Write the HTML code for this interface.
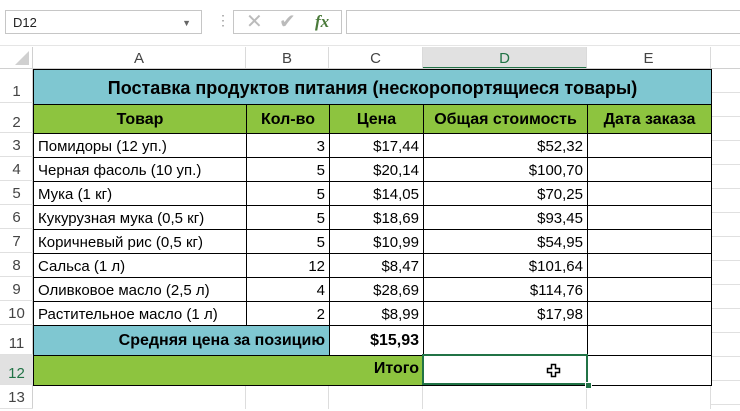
<!DOCTYPE html>
<html><head><meta charset="utf-8"><style>
body{margin:0;width:740px;height:409px;overflow:hidden;background:#fff;font-family:"Liberation Sans",Arial,sans-serif;position:relative}
.a{position:absolute}
.nb{left:5px;top:10px;width:197px;height:24px;border:1px solid #c6c6c6;font-size:13px;line-height:24px;box-sizing:border-box;padding-left:7px;color:#222}
.fb{left:233px;top:10px;width:109px;height:24px;border:1px solid #c6c6c6;box-sizing:border-box}
.fb2{left:346px;top:10px;width:400px;height:24px;border:1px solid #c6c6c6;box-sizing:border-box}
.ch{top:47px;height:22px;font-size:15px;color:#444;text-align:center;line-height:24px;border-right:1px solid #dadada;box-sizing:border-box}
.rh{left:0;width:33px;font-size:15px;color:#444;text-align:center;box-sizing:border-box;border-bottom:1px solid #e0e0e0}
table{position:absolute;left:33px;top:69px;border-collapse:collapse;font-size:15px;table-layout:fixed}
td{border:1px solid #000;padding:0 4px;height:23px;white-space:nowrap;overflow:hidden;line-height:20px;vertical-align:bottom}
.r{text-align:right}.c{text-align:center}.b{font-weight:bold}
.t{background:#7fc7d1}.g{background:#8dc43f}
.g td{font-size:16px;padding-bottom:3px}
</style></head><body>
<div class="a nb">D12<span style="position:absolute;right:10px;top:0;font-size:9px;color:#666">▼</span></div>
<div class="a" style="left:216px;top:12px;color:#999;font-size:14px">⋮</div>
<div class="a fb"><span style="position:absolute;left:12px;top:0;font-size:20px;color:#bbb;line-height:22px">✕</span><span style="position:absolute;left:45px;top:0;font-size:20px;color:#bbb;line-height:22px">✔</span><span style="position:absolute;left:81px;top:0;font-size:17px;color:#4a7a3a;font-style:italic;font-family:'Liberation Serif',serif;line-height:22px;font-weight:bold">fx</span></div>
<div class="a fb2"></div>
<div class="a" style="left:0;top:45px;width:740px;height:1px;background:#e5e5e5"></div>
<svg class="a" style="left:14px;top:50px" width="16" height="16"><polygon points="15,1 15,15 1,15" fill="#d0d0d0"/></svg>
<div class="a ch" style="left:33px;width:213px">A</div>
<div class="a ch" style="left:246px;width:83px">B</div>
<div class="a ch" style="left:329px;width:94px">C</div>
<div class="a ch" style="left:423px;width:164px;background:#e1e1e1;color:#217346;border-bottom:2px solid #217346">D</div>
<div class="a ch" style="left:587px;width:124px">E</div>
<div class="a" style="left:0;top:68px;width:740px;height:1px;background:#d0d0d0"></div>
<div class="a" style="left:32px;top:47px;width:1px;height:362px;background:#d0d0d0"></div>
<div class="a rh" style="top:69px;height:34px;line-height:46px">1</div>
<div class="a rh" style="top:103px;height:30px;line-height:40px">2</div>
<div class="a rh" style="top:133px;height:24px;line-height:26px">3</div>
<div class="a rh" style="top:157px;height:24px;line-height:26px">4</div>
<div class="a rh" style="top:181px;height:24px;line-height:26px">5</div>
<div class="a rh" style="top:205px;height:24px;line-height:26px">6</div>
<div class="a rh" style="top:229px;height:24px;line-height:26px">7</div>
<div class="a rh" style="top:253px;height:24px;line-height:26px">8</div>
<div class="a rh" style="top:277px;height:24px;line-height:26px">9</div>
<div class="a rh" style="top:301px;height:24px;line-height:26px">10</div>
<div class="a rh" style="top:325px;height:30px;line-height:38px">11</div>
<div class="a rh" style="top:355px;height:30px;line-height:38px;background:#e1e1e1;color:#217346">12</div>
<div class="a rh" style="top:385px;height:24px;line-height:26px">13</div>
<div class="a" style="left:711px;top:69px;width:29px;height:340px;background:repeating-linear-gradient(#fff 0 23px,#e0e0e0 23px 24px)"></div>
<div class="a" style="left:33px;top:385px;width:678px;height:24px;background:linear-gradient(90deg,transparent 212px,#ddd 212px 213px,transparent 213px 295px,#ddd 295px 296px,transparent 296px 389px,#ddd 389px 390px,transparent 390px 553px,#ddd 553px 554px,transparent 554px 677px,#ddd 677px)"></div>
<table>
<colgroup><col style="width:213px"><col style="width:83px"><col style="width:94px"><col style="width:164px"><col style="width:124px"></colgroup>
<tr><td colspan="5" class="t b c" style="height:33px;font-size:18px;line-height:30px;padding-bottom:1px">Поставка продуктов питания (нескоропортящиеся товары)</td></tr>
<tr class="g b"><td class="c" style="height:25px">Товар</td><td class="c">Кол-во</td><td class="c">Цена</td><td class="c">Общая стоимость</td><td class="c">Дата заказа</td></tr>
<tr><td>Помидоры (12 уп.)</td><td class="r">3</td><td class="r">$17,44</td><td class="r">$52,32</td><td></td></tr>
<tr><td>Черная фасоль (10 уп.)</td><td class="r">5</td><td class="r">$20,14</td><td class="r">$100,70</td><td></td></tr>
<tr><td>Мука (1 кг)</td><td class="r">5</td><td class="r">$14,05</td><td class="r">$70,25</td><td></td></tr>
<tr><td>Кукурузная мука (0,5 кг)</td><td class="r">5</td><td class="r">$18,69</td><td class="r">$93,45</td><td></td></tr>
<tr><td>Коричневый рис (0,5 кг)</td><td class="r">5</td><td class="r">$10,99</td><td class="r">$54,95</td><td></td></tr>
<tr><td>Сальса (1 л)</td><td class="r">12</td><td class="r">$8,47</td><td class="r">$101,64</td><td></td></tr>
<tr><td>Оливковое масло (2,5 л)</td><td class="r">4</td><td class="r">$28,69</td><td class="r">$114,76</td><td></td></tr>
<tr><td>Растительное масло (1 л)</td><td class="r">2</td><td class="r">$8,99</td><td class="r">$17,98</td><td></td></tr>
<tr><td colspan="2" class="t r b" style="height:25px;font-size:16px;padding-bottom:4px">Средняя цена за позицию</td><td class="r b" style="font-size:16px;padding-bottom:4px">$15,93</td><td></td><td></td></tr>
<tr><td colspan="3" class="g r b" style="height:23px;font-size:16px;padding-bottom:6px">Итого</td><td></td><td></td></tr>
</table>
<div class="a" style="left:422px;top:354px;width:166px;height:31px;border:2px solid #217346;box-sizing:border-box"></div>
<div class="a" style="left:585px;top:382px;width:5px;height:5px;background:#217346;border:1px solid #fff"></div>
<svg class="a" style="left:546px;top:363px" width="16" height="16"><path d="M5.5 1.5h4v4h4v4h-4v4h-4v-4h-4v-4h4z" fill="#fff" stroke="#000" stroke-width="1.5"/></svg>
</body></html>
